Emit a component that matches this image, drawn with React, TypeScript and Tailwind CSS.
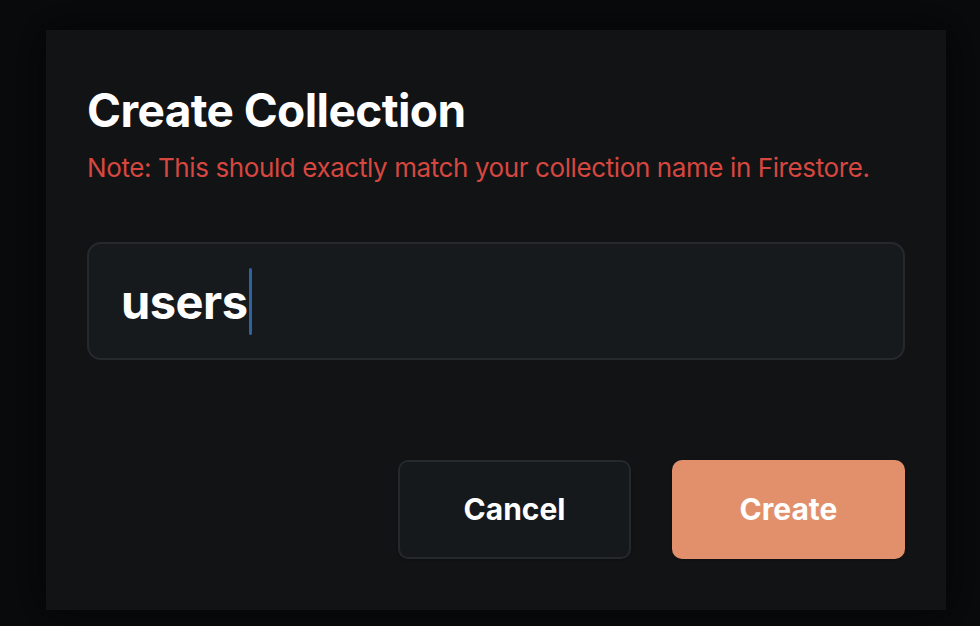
import React from "react";

export default function App() {
  const name = "users";
  return (
    <div
      className="w-[980px] h-[626px] bg-[#0a0b0d] flex items-start pl-[46px] pt-[30px]"
      style={{ fontFamily: "Inter, 'Noto Sans', sans-serif" }}
    >
      <div className="w-[900px] h-[580px] bg-[#121315] shadow-[0_0_40px_10px_rgba(0,0,0,0.5)] px-[41px] pt-[50px] flex flex-col">
        {/* header */}
        <h3 className="text-[46px] leading-[60px] font-bold text-white tracking-[-0.6px]">
          Create Collection
        </h3>
        <p className="text-[26px] leading-[34px] text-[#d6473f] mt-[11px] tracking-[-0.4px]">
          Note: This should exactly match your collection name in Firestore.
        </p>
        {/* body */}
        <div className="mt-[57px] h-[118px] w-[818px] rounded-[14px] border-2 border-[#25282d] bg-[#171a1d] flex items-center px-[32px]">
          <span className="text-white font-bold text-[47px] leading-none tracking-[-0.5px]">
            {name}
          </span>
          <span className="w-[3px] h-[67px] rounded-full bg-[#2f62a0] ml-[1px]" />
        </div>
        {/* footer */}
        <div className="flex justify-end gap-[41px] mt-[100px]">
          <button
            type="button"
            className="w-[233px] h-[99px] rounded-[10px] border-2 border-[#25282d] bg-[#16191c] text-white font-bold text-[30px] shadow"
          >
            Cancel
          </button>
          <button
            type="button"
            className="w-[233px] h-[99px] rounded-[10px] bg-[#e2906b] text-white font-bold text-[30px] shadow"
          >
            Create
          </button>
        </div>
      </div>
    </div>
  );
}
